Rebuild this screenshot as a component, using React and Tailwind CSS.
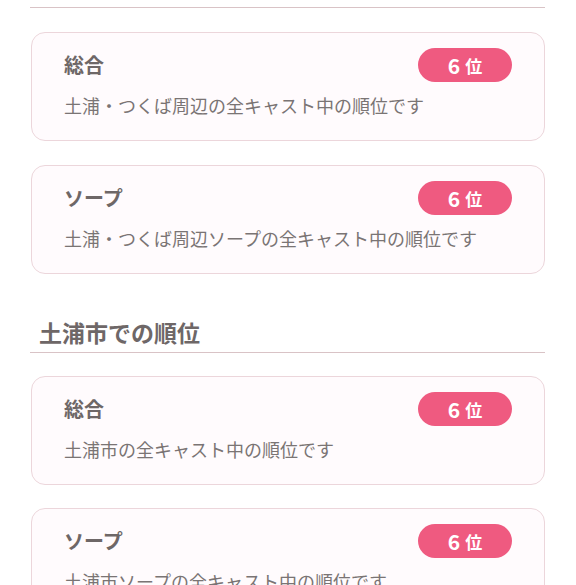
const font = { fontFamily: '"Noto Sans CJK JP", "Noto Sans", sans-serif' };

function RankCard({ title, note, rank }) {
  return (
    <div className="rounded-[14px] border border-[#ecd6db] bg-[#fffbfd] px-[32px] pt-[15px] pb-[22px]">
      <div className="flex h-[34px] items-center justify-between">
        <span className="text-[20px] font-bold leading-none text-[#6e6767]">{title}</span>
        <span className="flex h-[34px] w-[94px] items-center justify-center gap-[5px] rounded-full bg-[#ef5a80] text-white">
          <span className="text-[21px] font-bold leading-none">{rank}</span>
          <span className="text-[17px] font-bold leading-none">位</span>
        </span>
      </div>
      <p className="mt-[10px] text-[18px] leading-[26px] text-[#7a7474]">{note}</p>
    </div>
  );
}

export default function App() {
  return (
    <div className="h-[585px] overflow-hidden bg-white pl-[30px] pr-[31px]" style={font}>
      <div className="h-[8px] border-b border-[#d9c3c6]" />
      <div className="mt-[24px] flex flex-col gap-[24px] pl-[1px]">
        <RankCard title="総合" note="土浦・つくば周辺の全キャスト中の順位です" rank="6" />
        <RankCard title="ソープ" note="土浦・つくば周辺ソープの全キャスト中の順位です" rank="6" />
      </div>
      <div className="mt-[42px]">
        <h2 className="border-b border-[#d9c3c6] pb-[4px] pl-[9px] text-[23px] font-bold leading-[32px] text-[#6e6767]">
          土浦市での順位
        </h2>
        <div className="mt-[23px] flex flex-col gap-[23px] pl-[1px]">
          <RankCard title="総合" note="土浦市の全キャスト中の順位です" rank="6" />
          <RankCard title="ソープ" note="土浦市ソープの全キャスト中の順位です" rank="6" />
        </div>
      </div>
    </div>
  );
}
